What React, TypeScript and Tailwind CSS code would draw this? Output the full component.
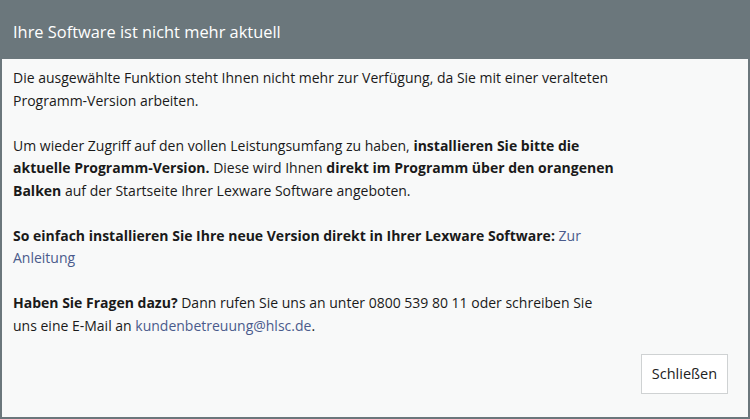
export default function App() {
  return (
    <div className="flex h-[419px] w-[750px] flex-col bg-[#6b777c] font-['Open_Sans',sans-serif] text-[#1a1a1a]">
      <div className="flex h-[59px] shrink-0 items-center px-[13px] pt-[5px]">
        <h1 className="text-[16.4px] font-normal text-white">Ihre Software ist nicht mehr aktuell</h1>
      </div>
      <div className="mx-[2px] mb-[2px] flex flex-1 flex-col bg-[#f8f9f9] pl-[11px] pr-[20px] pt-[8px]">
        <div className="max-w-[604px] text-[14px] leading-[22.5px]">
          <p>
            Die ausgewählte Funktion steht Ihnen nicht mehr zur Verfügung, da Sie mit einer veralteten
            Programm-Version arbeiten.
          </p>
          <p className="mt-[22.5px]">
            Um wieder Zugriff auf den vollen Leistungsumfang zu haben,{' '}
            <b className="font-bold">installieren Sie bitte die aktuelle Programm-Version.</b> Diese wird Ihnen{' '}
            <b className="font-bold">direkt im Programm über den orangenen Balken</b> auf der Startseite Ihrer
            Lexware Software angeboten.
          </p>
          <p className="mt-[22.5px]">
            <b className="font-bold">So einfach installieren Sie Ihre neue Version direkt in Ihrer Lexware Software:</b>{' '}
            <a className="text-[#4a5b8c]">Zur Anleitung</a>
          </p>
          <p className="mt-[22.5px]">
            <b className="font-bold">Haben Sie Fragen dazu?</b> Dann rufen Sie uns an unter 0800 539 80 11 oder
            schreiben Sie uns eine E-Mail an <a className="text-[#4a5b8c]">kundenbetreuung@hlsc.de</a>.
          </p>
        </div>
        <div className="mt-auto flex justify-end pb-[23px]">
          <button className="h-[40px] w-[87px] border border-[#cfd2d3] bg-white text-[14.5px] text-[#222]">
            Schließen
          </button>
        </div>
      </div>
    </div>
  );
}
